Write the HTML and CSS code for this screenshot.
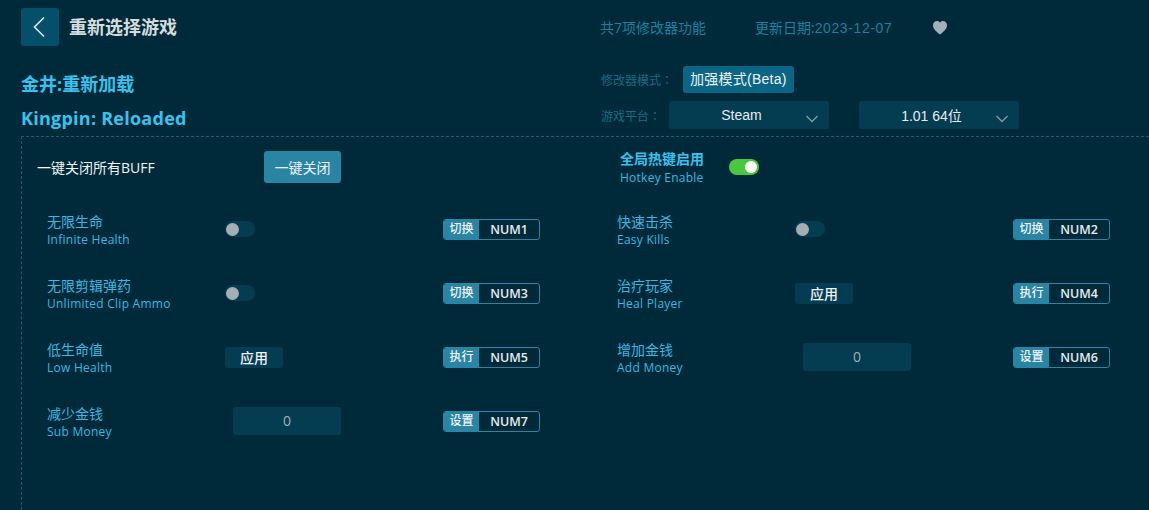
FILE: index.html
```html
<!DOCTYPE html>
<html lang="zh">
<head>
<meta charset="utf-8">
<title>重新选择游戏</title>
<link rel="stylesheet" href="styles.css">
</head>
<body>
<div class="page">
  <header class="top">
    <div class="top-left">
      <div class="title-row">
        <button class="back"><svg width="14" height="22" viewBox="0 0 14 22"><path d="M12 1.5 2.5 11 12 20.5" fill="none" stroke="#dfe6e8" stroke-width="1.6"/></svg></button>
        <span class="page-title">重新选择游戏</span>
      </div>
      <div class="game-cn">金井:重新加载</div>
      <div class="game-en">Kingpin: Reloaded</div>
    </div>
    <div class="top-right">
      <div class="info-row">
        <span class="info-count">共7项修改器功能</span>
        <span class="info-date">更新日期:<span class="date-num">2023-12-07</span></span>
        <svg class="heart" width="16" height="15" viewBox="0 0 16 15"><path d="M8 14.5C3 10.500 1 8.300 1 5.200 1 2.800 2.800 1 5 1c1.300 0 2.400.6 3 1.700C8.600 1.600 9.700 1 11 1c2.200 0 4 1.800 4 4.200 0 3.100-2 5.300-7 9.300z" fill="#a4b0b8"/></svg>
      </div>
      <div class="mode-row">
        <span class="dim-label" lang="zh-Hant">修改器模式：</span>
        <span class="mode-btn">加强模式(Beta)</span>
      </div>
      <div class="platform-row">
        <span class="dim-label" lang="zh-Hant">游戏平台：</span>
        <div class="select select-a"><span>Steam</span><svg class="caret" width="14" height="8" viewBox="0 0 14 8"><path d="M1.500 1 7 6.500 12.500 1" fill="none" stroke="#8a9aa3" stroke-width="1.300"/></svg></div>
        <div class="select select-b"><span>1.01 64位</span><svg class="caret" width="14" height="8" viewBox="0 0 14 8"><path d="M1.500 1 7 6.500 12.500 1" fill="none" stroke="#8a9aa3" stroke-width="1.300"/></svg></div>
      </div>
    </div>
  </header>
  <main class="panel">
    <div class="global">
      <div class="global-left">
        <span class="all-off">一键关闭所有BUFF</span>
        <button class="off-btn">一键关闭</button>
      </div>
      <div class="global-right">
        <div class="hotkey-label"><div class="hk-cn">全局热键启用</div><div class="hk-en">Hotkey Enable</div></div>
        <span class="switch-on"><i></i></span>
      </div>
    </div>
    <div class="grid">
      <div class="row">
        <div class="label"><div class="cn">无限生命</div><div class="en">Infinite Health</div></div>
        <div class="control"><span class="switch"><i></i></span></div>
        <div class="key"><span class="key-tag">切换</span><span class="key-name">NUM1</span></div>
      </div>
      <div class="row">
        <div class="label"><div class="cn">快速击杀</div><div class="en">Easy Kills</div></div>
        <div class="control"><span class="switch"><i></i></span></div>
        <div class="key"><span class="key-tag">切换</span><span class="key-name">NUM2</span></div>
      </div>
      <div class="row">
        <div class="label"><div class="cn">无限剪辑弹药</div><div class="en">Unlimited Clip Ammo</div></div>
        <div class="control"><span class="switch"><i></i></span></div>
        <div class="key"><span class="key-tag">切换</span><span class="key-name">NUM3</span></div>
      </div>
      <div class="row">
        <div class="label"><div class="cn">治疗玩家</div><div class="en">Heal Player</div></div>
        <div class="control"><span class="apply">应用</span></div>
        <div class="key"><span class="key-tag">执行</span><span class="key-name">NUM4</span></div>
      </div>
      <div class="row">
        <div class="label"><div class="cn">低生命值</div><div class="en">Low Health</div></div>
        <div class="control"><span class="apply">应用</span></div>
        <div class="key"><span class="key-tag">执行</span><span class="key-name">NUM5</span></div>
      </div>
      <div class="row">
        <div class="label"><div class="cn">增加金钱</div><div class="en">Add Money</div></div>
        <div class="control"><span class="number">0</span></div>
        <div class="key"><span class="key-tag">设置</span><span class="key-name">NUM6</span></div>
      </div>
      <div class="row">
        <div class="label"><div class="cn">减少金钱</div><div class="en">Sub Money</div></div>
        <div class="control"><span class="number">0</span></div>
        <div class="key"><span class="key-tag">设置</span><span class="key-name">NUM7</span></div>
      </div>
    </div>
  </main>
</div>
</body>
</html>
```
FILE: styles.css
```css
* { box-sizing: border-box; }
html, body { margin: 0; padding: 0; height: 100%; overflow: hidden; }
body {
  background: #002a3a;
  font-family: "Open Sans", "Noto Sans CJK SC", sans-serif;
  color: #fff;
}
.page { height: 510px; padding-left: 21px; display: flex; flex-direction: column; }
.top { display: flex; height: 136px; padding-top: 8px; flex: none; }
.top-left { width: 579px; flex: none; }
.title-row { display: flex; align-items: center; gap: 10px; height: 38px; }
.back {
  width: 38px; height: 38px; border: 0; border-radius: 3px; background: #04506a;
  display: flex; align-items: center; justify-content: center; padding: 0 2px 0 0;
}
.page-title { font-size: 18px; font-weight: 700; color: #d5dcdf; line-height: 40px; }
.game-cn { margin-top: 23px; font-size: 18px; font-weight: 700; color: #3bc1ee; line-height: 30px; }
.game-en { margin-top: 4px; font-size: 18px; font-weight: 700; color: #3bc1ee; line-height: 30px; letter-spacing: .25px; }
.top-right { flex: 1; }
.info-row { display: flex; align-items: center; height: 38px; font-size: 14px; color: #1f7f9f; }
.info-count { width: 155px; }
.info-date { width: 177px; }
.date-num { font-family: "Liberation Sans", sans-serif; letter-spacing: .6px; }
.mode-row { display: flex; align-items: center; margin-top: 20px; height: 27px; }
.dim-label { font-size: 12px; color: #1a6a84; white-space: nowrap; font-family: "Noto Sans CJK TC", sans-serif; }
.mode-row .dim-label { width: 83px; padding-left: 1px; }
.mode-btn {
  height: 27px; padding: 0 7px; background: #0a6684; border-radius: 3px;
  font-size: 14px; line-height: 27px; color: #f0f4f5; letter-spacing: .25px;
  font-family: "Liberation Sans", "Noto Sans CJK SC", sans-serif;
}
.platform-row { display: flex; align-items: center; margin-top: 8px; height: 28px; }
.platform-row .dim-label { width: 69px; padding-left: 1px; }
.select {
  width: 160px; height: 28px; background: #043c52; border-radius: 3px;
  display: flex; align-items: center; font-size: 14px; color: #e6ecee; position: relative;
  font-family: "Liberation Sans", "Noto Sans CJK SC", sans-serif;
}
.select span { width: 145px; text-align: center; }
.select-b { margin-left: 30px; }
.caret { position: absolute; right: 10px; top: 14px; }
.panel {
  flex: 1; border-top: 1px dashed #14617c; border-left: 1px dashed #14617c;
  padding: 14px 0 0 15px;
}
.global { display: flex; height: 46px; }
.global-left { width: 583px; display: flex; align-items: flex-start; flex: none; }
.all-off { width: 227px; font-size: 14px; line-height: 34px; color: #f0f4f5; }
.off-btn {
  width: 77px; height: 32px; border: 0; border-radius: 3px; background: #2a84a4; color: #f0f4f5;
  font: inherit; font-size: 14px; padding: 0;
}
.global-right { display: flex; align-items: flex-start; gap: 25px; margin-top: -1px; }
.hk-cn { font-size: 14px; font-weight: 700; color: #3bc1ee; line-height: 18px; }
.hk-en { font-size: 12px; color: #3bb7e2; line-height: 18px; margin-top: 1px; letter-spacing: .25px; }
.switch-on {
  width: 30px; height: 16px; margin-top: 9px; border-radius: 8px; background: #47c83e;
  display: flex; align-items: center; justify-content: flex-end; padding-right: 2px;
}
.switch-on i { width: 12px; height: 12px; border-radius: 50%; background: #fff; }
.grid {
  margin-top: 16px; padding-left: 10px;
  display: grid; grid-template-columns: 570px 1fr; grid-auto-rows: 64px;
}
.row { display: flex; align-items: flex-start; }
.label { width: 178px; flex: none; }
.cn { font-size: 14px; line-height: 18px; color: #3bb7e2; }
.en { font-size: 12px; line-height: 16px; color: #3bb7e2; margin-top: 1px; letter-spacing: .25px; }
.control { width: 218px; flex: none; padding-top: 6px; height: 40px; display: flex; }
.switch {
  width: 30px; height: 16px; border-radius: 8px; background: #043c52;
  display: flex; align-items: center; padding-left: 1px; margin-top: 2px;
}
.switch i { width: 13px; height: 13px; border-radius: 50%; background: #a4aeb3; }
.apply {
  width: 58px; height: 21px; background: #043c52; border-radius: 3px;
  font-size: 14px; font-weight: 500; line-height: 21px; text-align: center; color: #eef2f3;
}
.number {
  width: 108px; height: 28px; margin: -4px 0 0 8px; background: #043c52; border-radius: 3px;
  font-size: 14px; line-height: 28px; text-align: center; color: #a4b0b8;
}
.key {
  margin-top: 6px; width: 97px; height: 21px; display: flex; border: 1px solid #2a84a4; border-radius: 3px; overflow: hidden;
  font-size: 12px; line-height: 18px; color: #e6ecee;
}
.key-tag { width: 35px; flex: none; background: #2a84a4; text-align: center; font-weight: 500; color: #f0f4f5; }
.key-name { flex: 1; text-align: center; font-weight: 600; font-size: 12.500px; line-height: 19px; }
```
